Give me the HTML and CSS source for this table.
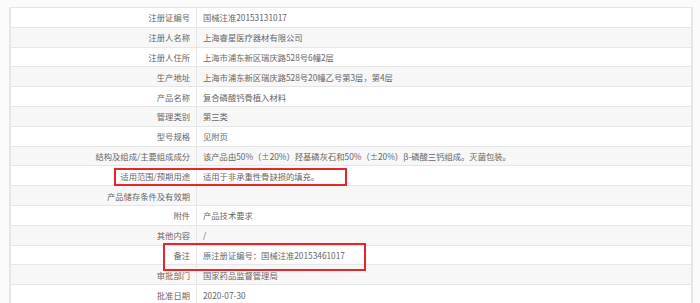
FILE: index.html
```html
<!DOCTYPE html>
<html lang="zh-CN">
<head>
<meta charset="utf-8">
<link rel="stylesheet" href="styles.css">
</head>
<body>
<div class="wrap">
  <table class="info">
    <tr><th>注册证编号</th><td>国械注准20153131017</td></tr>
    <tr><th>注册人名称</th><td>上海睿星医疗器材有限公司</td></tr>
    <tr><th>注册人住所</th><td>上海市浦东新区瑞庆路528号6幢2层</td></tr>
    <tr><th>生产地址</th><td>上海市浦东新区瑞庆路528号20幢乙号第3层，第4层</td></tr>
    <tr><th>产品名称</th><td>复合磷酸钙骨植入材料</td></tr>
    <tr><th>管理类别</th><td>第三类</td></tr>
    <tr><th>型号规格</th><td>见附页</td></tr>
    <tr><th>结构及组成/主要组成成分</th><td>该产品由50%（±20%）羟基磷灰石和50%（±20%）β-磷酸三钙组成。灭菌包装。</td></tr>
    <tr><th>适用范围/预期用途</th><td>适用于非承重性骨缺损的填充。</td></tr>
    <tr><th>产品储存条件及有效期</th><td></td></tr>
    <tr><th>附件</th><td>产品技术要求</td></tr>
    <tr><th>其他内容</th><td>/</td></tr>
    <tr><th>备注</th><td>原注册证编号：国械注准20153461017</td></tr>
    <tr><th>审批部门</th><td>国家药品监督管理局</td></tr>
    <tr><th>批准日期</th><td>2020-07-30</td></tr>
  </table>
  <div class="mark mark-1"></div>
  <div class="mark mark-2"></div>
</div>
</body>
</html>
```
FILE: styles.css
```css
html, body {
  margin: 0;
  padding: 0;
  background: #fbfbfb;
}
body {
  font-family: "Noto Sans CJK SC", "Noto Sans", sans-serif;
  font-size: 8.3px;
  color: #666;
}
.wrap {
  position: relative;
  padding: 7px 0 0 9px;
}
.info {
  border-collapse: collapse;
  width: 684px;
  background: #fff;
  border-left: 2px solid #e6e6e6;
  border-right: 2px solid #e6e6e6;
}
.info tr {
  height: 19.8px;
}
.info tr:nth-child(even) {
  background: #f7f7f7;
}
.info th, .info td {
  border-top: 1.5px solid #e6e6e6;
  padding: 0;
  line-height: 12px;
  font-weight: normal;
  white-space: nowrap;
  vertical-align: middle;
}
.info th {
  width: 179px;
  text-align: right;
  padding-right: 6px;
  border-right: 1.5px solid #e6e6e6;
}
.info td {
  text-align: left;
  padding-left: 6px;
}
.mark {
  position: absolute;
  border: 2px solid #e8262a;
  box-sizing: border-box;
}
.mark-1 {
  left: 114px;
  top: 168px;
  width: 233px;
  height: 18px;
}
.mark-2 {
  left: 163px;
  top: 243px;
  width: 203px;
  height: 28px;
}
```
